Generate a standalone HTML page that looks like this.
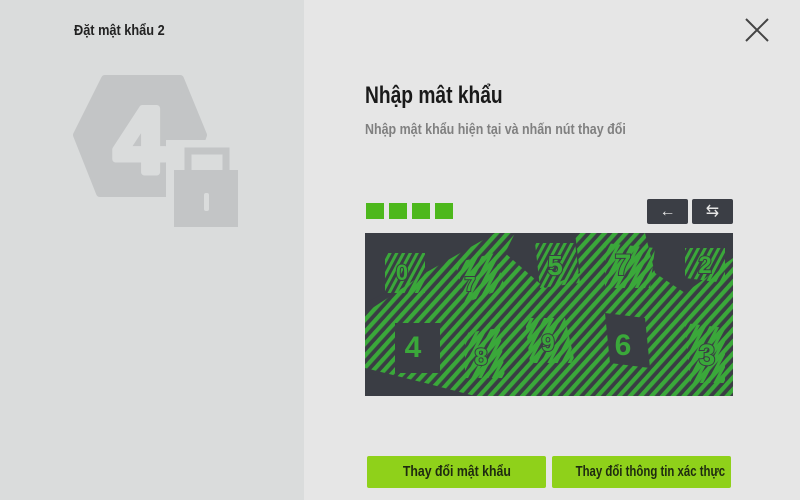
<!DOCTYPE html>
<html><head><meta charset="utf-8"><style>
*{margin:0;padding:0;box-sizing:border-box}
html,body{width:800px;height:500px;overflow:hidden}
body{background:#e6e6e6;font-family:"Liberation Sans",sans-serif;position:relative}
.left{position:absolute;left:0;top:0;width:304px;height:500px;background:#dadcdc}
.t{position:absolute;white-space:nowrap;transform-origin:0 0;font-weight:bold}
.sq{position:absolute;top:203px;width:18px;height:16px;background:#4db81c}
.btn{position:absolute;top:199px;width:41px;height:25px;background:#3b3e45;border-radius:2px;color:#e6e6e6;font-size:16px;text-align:center;line-height:25px}
.gb{position:absolute;top:456px;height:32px;background:#8fd11a;border-radius:2px;color:#1e2a10;font-weight:bold;font-size:15px;text-align:center;line-height:32px;white-space:nowrap;overflow:hidden}
.gb span{display:inline-block;transform:scaleX(.82)}
</style></head><body>
<div class="left"></div>
<div class="t" style="left:74px;top:22px;font-size:15px;color:#222;transform:scaleX(.85)">Đặt mật khẩu 2</div>
<svg style="position:absolute;left:0;top:0" width="304" height="260">
<polygon points="105,79 180,79 203,135 182,193 100,193 77,135" fill="#c3c5c6" stroke="#c3c5c6" stroke-width="8" stroke-linejoin="round"/>
<text x="140" y="172" text-anchor="middle" font-family="Liberation Sans" font-weight="bold" font-size="92" fill="#dadcdc" stroke="#dadcdc" stroke-width="7" stroke-linejoin="round">4</text>
<rect x="166" y="140" width="80" height="95" fill="#dadcdc"/>
<rect x="188" y="151" width="38" height="30" fill="none" stroke="#c3c5c6" stroke-width="7"/>
<rect x="174" y="170" width="64" height="57" fill="#c3c5c6"/>
<rect x="204" y="193" width="5" height="18" rx="2" fill="#dadcdc"/>
</svg>
<svg style="position:absolute;left:744px;top:17px" width="26" height="26"><path d="M2 2L24 24M24 2L2 24" stroke="#444" stroke-width="2"/></svg>
<div class="t" style="left:365px;top:82px;font-size:24px;color:#1a1a1a;transform:scaleX(.8)">Nhập mât khẩu</div>
<div class="t" style="left:365px;top:121px;font-size:15px;color:#808080;transform:scaleX(.83)">Nhập mật khẩu hiện tại và nhấn nút thay đổi</div>
<div class="sq" style="left:366px"></div><div class="sq" style="left:389px"></div><div class="sq" style="left:412px"></div><div class="sq" style="left:435px"></div>
<div class="btn" style="left:647px">&#8592;</div>
<div class="btn" style="left:692px">&#8646;</div>
<svg style="position:absolute;left:365px;top:233px" width="368" height="163">
<defs>
<pattern id="s" width="8" height="8" patternUnits="userSpaceOnUse" patternTransform="rotate(-48)"><rect width="8" height="4.2" fill="#3aa83a"/></pattern>
<pattern id="s2" width="6" height="6" patternUnits="userSpaceOnUse" patternTransform="rotate(-62)"><rect width="6" height="3" fill="#3aa83a"/></pattern>
</defs>
<rect width="368" height="163" fill="#3a3d44"/>
<polygon points="0,80 60,40 130,0 368,0 368,163 110,163 60,150 0,135" fill="url(#s)"/>
<polygon points="150,0 210,0 215,40 180,55 140,20" fill="#3a3d44"/>
<polygon points="280,0 368,0 368,25 320,60 290,40" fill="#3a3d44"/>
<polygon points="0,0 130,0 60,40 0,70" fill="#3a3d44"/>
<polygon points="20,20 60,20 60,60 20,60" fill="url(#s2)"/>
<polygon points="90,30 130,20 140,55 100,70" fill="url(#s2)"/>
<polygon points="170,10 210,10 215,50 175,55" fill="url(#s2)"/>
<polygon points="240,10 290,15 285,55 240,55" fill="url(#s2)"/>
<polygon points="320,15 360,15 360,50 320,45" fill="url(#s2)"/>
<polygon points="30,90 75,90 75,140 30,140" fill="#3a3d44"/>
<polygon points="160,85 200,85 210,130 165,130" fill="url(#s2)"/>
<polygon points="100,100 135,95 140,145 100,145" fill="url(#s2)"/>
<polygon points="240,80 280,85 285,135 245,130" fill="#3a3d44"/>
<polygon points="320,90 360,95 360,150 325,150" fill="url(#s2)"/>
<polygon points="0,140 60,150 100,163 0,163" fill="#3a3d44"/>
<g font-family="Liberation Sans" font-weight="bold" fill="#3aa83a" stroke="#3a3d44" stroke-width="2" paint-order="stroke" text-anchor="middle">
<text x="37" y="47" font-size="22">0</text><text x="105" y="58" font-size="20">7</text>
<text x="190" y="42" font-size="28">5</text><text x="258" y="42" font-size="30">7</text>
<text x="340" y="40" font-size="24">2</text><text x="48" y="124" font-size="30">4</text>
<text x="116" y="132" font-size="24">8</text><text x="183" y="118" font-size="24">9</text>
<text x="258" y="122" font-size="30">6</text><text x="342" y="132" font-size="30">3</text>
</g>
</svg>
<div class="gb" style="left:367px;width:179px"><span>Thay đổi mật khẩu</span></div>
<div class="gb" style="left:552px;width:179px"><span style="transform:scaleX(.76)">Thay đổi thông tin xác thực</span></div>
</body></html>
